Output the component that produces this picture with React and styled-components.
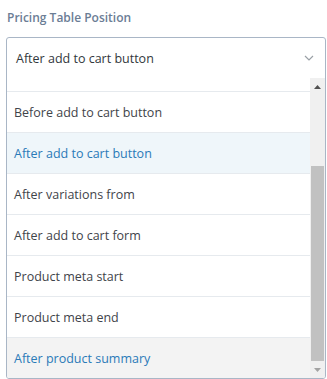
import React, { useLayoutEffect, useRef } from "react";
import styled, { createGlobalStyle } from "styled-components";

const Global = createGlobalStyle`
  html, body { margin: 0; padding: 0; background: #ffffff; }
  body { font-family: "Open Sans", "Noto Sans", sans-serif; }
`;

const Page = styled.div`
  width: 327px;
  height: 379px;
  box-sizing: border-box;
  padding: 8px 1px 0 6px;
  display: flex;
  flex-direction: column;
`;

const Label = styled.div`
  font-size: 12px;
  font-weight: 600;
  color: #6b7d95;
  line-height: 20px;
  padding-left: 1px;
  margin-bottom: 9px;
`;

const Box = styled.div`
  border: 1px solid #a9b6c6;
  border-radius: 3px;
  display: flex;
  flex-direction: column;
  overflow: hidden;
  height: 342px;
  box-sizing: border-box;
`;

const Header = styled.div`
  height: 40px;
  flex: none;
  display: flex;
  align-items: center;
  justify-content: space-between;
  padding: 0 11px 0 9px;
  font-size: 12.5px;
  color: #32373c;
`;

const Body = styled.div`
  flex: 1;
  display: flex;
  min-height: 0;
`;

const List = styled.div`
  flex: 1;
  overflow: hidden;
`;

const Row = styled.div`
  height: 40px;
  border-bottom: 1px solid #e6eaee;
  display: flex;
  align-items: center;
  padding-left: 7px;
  font-size: 12.5px;
  color: ${(p) => (p.$active || p.$hover ? "#2a7ab8" : "#3f444a")};
  background: ${(p) => (p.$active ? "#eff6fa" : p.$hover ? "#f3f3f3" : "#ffffff")};
  &:last-child { border-bottom: none; }
`;

const Scrollbar = styled.div`
  width: 15px;
  flex: none;
  background: #f0f0f0;
  display: flex;
  flex-direction: column;
`;

const Arrow = styled.div`
  height: 17px;
  flex: none;
  display: flex;
  align-items: center;
  justify-content: center;
`;

const Track = styled.div`
  flex: 1;
  display: flex;
  flex-direction: column;
  justify-content: flex-end;
  padding: 0 1px;
`;

const Thumb = styled.div`
  height: 195px;
  background: #c1c1c1;
`;

const options = [
  "",
  "Before add to cart button",
  "After add to cart button",
  "After variations from",
  "After add to cart form",
  "Product meta start",
  "Product meta end",
  "After product summary",
];

export default function App() {
  const ref = useRef(null);
  useLayoutEffect(() => {
    if (ref.current) ref.current.scrollTop = ref.current.scrollHeight;
  }, []);
  return (
    <>
      <Global />
      <Page>
        <Label>Pricing Table Position</Label>
        <Box>
          <Header>
            <span>After add to cart button</span>
            <svg width="10" height="6" viewBox="0 0 10 6">
              <path d="M1 1l4 4 4-4" fill="none" stroke="#9aa0a6" strokeWidth="1.2" />
            </svg>
          </Header>
          <Body>
            <List ref={ref}>
              {options.map((o, i) => (
                <Row key={i} $active={i === 2} $hover={i === 7}>
                  {o}
                </Row>
              ))}
            </List>
            <Scrollbar>
              <Arrow>
                <svg width="7" height="4" viewBox="0 0 7 4">
                  <path d="M0 4L3.5 0L7 4Z" fill="#505050" />
                </svg>
              </Arrow>
              <Track>
                <Thumb />
              </Track>
              <Arrow>
                <svg width="7" height="4" viewBox="0 0 7 4">
                  <path d="M0 0L3.5 4L7 0Z" fill="#a3a3a3" />
                </svg>
              </Arrow>
            </Scrollbar>
          </Body>
        </Box>
      </Page>
    </>
  );
}
